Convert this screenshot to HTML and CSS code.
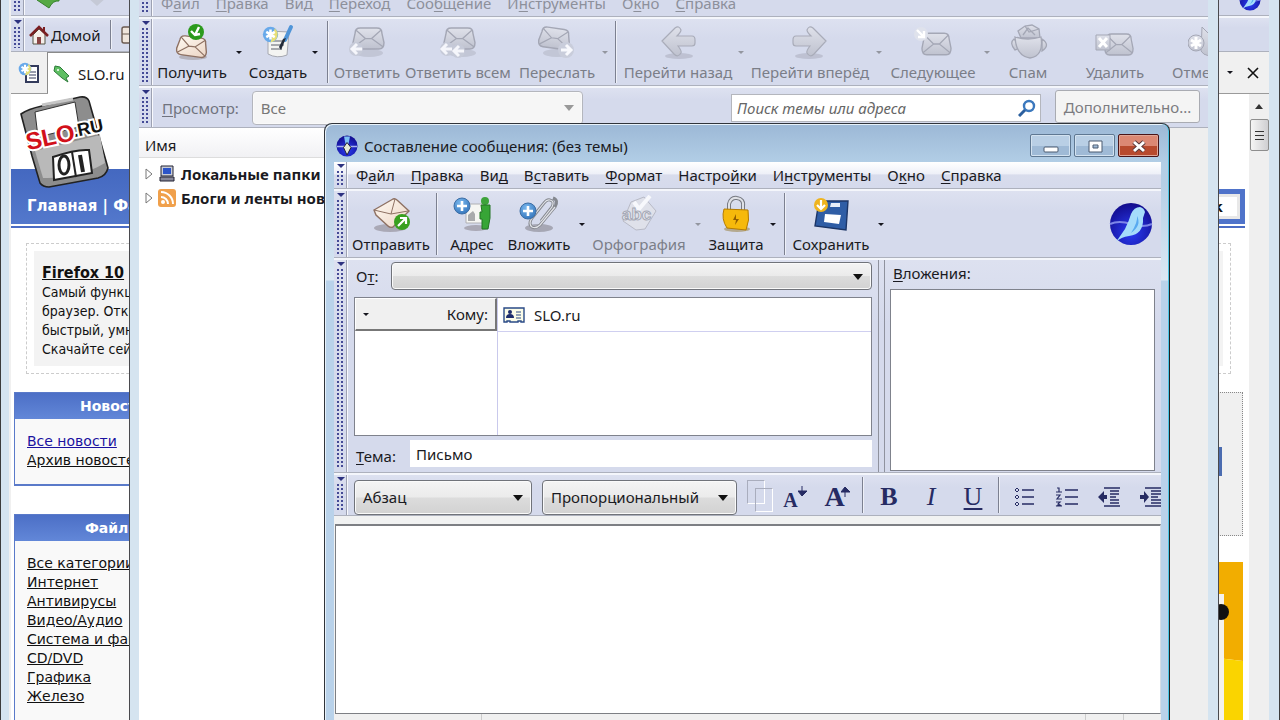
FILE: index.html
```html
<!DOCTYPE html>
<html lang="ru">
<head>
<meta charset="utf-8">
<title>Составление сообщения: (без темы)</title>
<link rel="stylesheet" href="styles.css">
</head>
<body>
<svg class="defs" aria-hidden="true">
  <defs>
    <linearGradient id="paper" x1="0" y1="0" x2="1" y2="1"><stop offset="0" stop-color="#fffaf3"/><stop offset="1" stop-color="#ecd5c4"/></linearGradient>
    <linearGradient id="silver" x1="0" y1="0" x2="0" y2="1"><stop offset="0" stop-color="#dfe1ea"/><stop offset="1" stop-color="#bfc2cf"/></linearGradient>
    <radialGradient id="globe" cx="0.5" cy="0.7" r="0.7"><stop offset="0" stop-color="#2a3cf4"/><stop offset="1" stop-color="#120c8c"/></radialGradient>
    <radialGradient id="badge" cx="0.4" cy="0.3" r="0.8"><stop offset="0" stop-color="#7ab8ee"/><stop offset="1" stop-color="#2f70b8"/></radialGradient>
    <symbol id="mail" viewBox="0 0 32 24" preserveAspectRatio="none">
      <path d="M3 7Q3 2 8 2H24Q29 2 29 7L31 16Q31 22 26 22H6Q1 22 1 16Z" stroke-width="1.4"/>
      <path d="M4 4L13 12H19L28 4M2 20L13 12M30 20L19 12" fill="none" stroke-width="1.2"/>
    </symbol>
    <symbol id="bird" viewBox="0 0 44 44">
      <circle cx="22" cy="22" r="21" fill="url(#globe)"/>
      <path d="M1 22Q10 18 22 22T43 22" fill="none" stroke="#7d86e8" stroke-width="2"/>
      <path d="M31 5Q35 6 36 10L34 16Q35 32 20 34Q12 35 7 40L16 27Q20 19 22 12Q25 5 31 5Z" fill="#a5dcfb"/>
      <path d="M28 14Q33 23 22 31Q29 20 28 14Z" fill="#58aaf0"/>
    </symbol>
    <symbol id="arrow" viewBox="0 0 36 34">
      <ellipse cx="19" cy="31" rx="14" ry="3" fill="#b3b7c7" opacity=".7"/>
      <path d="M2 16L15 3Q19 0 21 5Q21 7 17 11H32Q35 11 35 15V18Q35 21 32 21H18Q22 26 21 28Q18 33 14 29Z" fill="url(#silver)" stroke="#a9acb9" stroke-width="1.2"/>
    </symbol>
    <symbol id="spark" viewBox="0 0 20 20">
      <circle cx="10" cy="10" r="9" fill="#68a9ea"/><path d="M15 3A9 9 0 0 1 10 19Z" fill="#e7df76"/>
      <path d="M10 4V16M5 7L15 13M15 7L5 13" stroke="#fff" stroke-width="3"/>
    </symbol>
  </defs>
</svg>

<main class="desktop">

<section class="win win-browser" aria-label="Браузер">
  <div class="bar b-top"><span class="grip"></span>
    <svg class="nav-ic" width="26" height="20" viewBox="0 0 26 20"><path d="M2 8L12 0V5H24V9Q18 8 14 16Z" fill="#55a944" stroke="#357f2b"/></svg>
    <svg class="nav-ic" width="26" height="20" viewBox="0 0 26 20"><path d="M24 5L14 14 4 5V0H24Z" fill="#c5c9d6"/></svg>
    <svg class="mini-bird" width="22" height="22"><use href="#bird"/></svg>
  </div>
  <div class="bar b-home"><span class="grip"></span>
    <button class="home" type="button">
      <svg width="20" height="20" viewBox="0 0 20 20"><path d="M4 10V19H16V9L10 4Z" fill="#f5efea" stroke="#554" /><path d="M1 11L10 2 19 11" fill="none" stroke="#7a1f22" stroke-width="2.6"/><path d="M14 2H16V6H14Z" fill="#7a1f22"/><path d="M8 12H12V19H8Z" fill="#8a4444"/></svg>
      Домой</button>
    <i class="vsep"></i>
    <svg width="20" height="20" viewBox="0 0 20 20"><rect x="2" y="2" width="16" height="16" rx="2" fill="#efe5dc" stroke="#6b5a50" stroke-width="1.4"/><path d="M2 9H18" stroke="#6b5a50"/></svg>
  </div>
  <div class="tabs">
    <button class="newtab" type="button" aria-label="Новая вкладка"><svg width="22" height="24" viewBox="0 0 22 24"><path d="M8 5H20V21H8Z" fill="#fff" stroke="#333b5c" stroke-width="2"/><path d="M11 11H18M11 14H18M11 17H18" stroke="#333b5c"/><use href="#spark" width="14" height="14" y="1"/></svg></button>
    <button class="tab" type="button"><svg width="18" height="18" viewBox="0 0 18 18"><path d="M2 1L7 2 16 11 13 13 15 17 9 13 1 6Z" fill="#5fbf63" stroke="#2b7a38"/><circle cx="5" cy="5" r="1" fill="#fff"/></svg>SLO.ru</button>
    <span class="tab-tools"><i class="caret"></i>
      <button class="tab-close" type="button" aria-label="Закрыть вкладку"><svg width="12" height="12" viewBox="0 0 12 12"><path d="M1 1L11 11M11 1L1 11" stroke="#111" stroke-width="1.6"/></svg></button></span>
  </div>
  <div class="viewport">
    <div class="page">
      <header class="site-head">
        <svg class="logo" width="94" height="96" viewBox="0 0 94 96">
          <path d="M3 19Q10 14 24 11L62 2Q69 1 71 6L90 73Q88 81 80 83L31 92Q25 92 22 88L14 61Z" fill="#8d8d8d" stroke="#222" stroke-width="1.6"/>
          <path d="M17 17L57 7 61 32 20 42Z" fill="#fff" stroke="#333"/>
          <path d="M24 10L55 4" stroke="#c5c5c5" stroke-width="3"/>
          <path d="M17 56L82 40 87 68Q60 84 25 83Z" fill="#b9b9b9"/>
          <path d="M35 62Q58 54 71 55L74 78 36 85Z" fill="#fff" stroke="#222" stroke-width="2"/>
          <path d="M54 57L58 82" stroke="#222" stroke-width="2"/>
          <path d="M62 60L65 77" stroke="#222" stroke-width="4"/>
          <ellipse cx="46" cy="70" rx="5" ry="9" fill="none" stroke="#222" stroke-width="3"/>
          <g transform="rotate(-12 10 52)" stroke="#fff" stroke-width="4" paint-order="stroke"><text x="57" y="52" class="l-ru">.RU</text><text x="9" y="55" class="l-slo">SLO</text></g>
        </svg>
        <nav class="band"><span class="links"><a href="#">Главная</a> | <a href="#">Файлы</a></span><span class="findbox"><button class="find" type="button">Поиск</button></span></nav>
      </header>
      <div class="promo"><div class="promo-in"><a href="#">Firefox 10</a><p>Самый функциональный<br>браузер. Открытый,<br>быстрый, умный.<br>Скачайте сейчас</p></div></div>
      <div class="cols">
        <div class="side">
          <section class="box"><h2>Новости</h2><ul><li><a class="blue" href="#">Все новости</a></li><li><a href="#">Архив новостей</a></li></ul></section>
          <section class="box"><h2>Файлы</h2><ul><li><a href="#">Все категории</a></li><li><a href="#">Интернет</a></li><li><a href="#">Антивирусы</a></li><li><a href="#">Видео/Аудио</a></li><li><a href="#">Система и файлы</a></li><li><a href="#">CD/DVD</a></li><li><a href="#">Графика</a></li><li><a href="#">Железо</a></li></ul></section>
        </div>
        <div class="aside">
          <div class="dotted"><span></span></div>
          <svg class="banner" width="60" height="170" viewBox="0 0 60 170"><path d="M0 0H60V99L0 92Z" fill="#f2ad00"/><path d="M0 92L60 99V170H0Z" fill="#fad400"/><path d="M0 32H41V170H0Z" fill="#f4f2ee"/><circle cx="38" cy="50" r="8" fill="#111"/></svg>
        </div>
      </div>
    </div>
    <div class="scroll"><i class="up"></i><span class="thumb"><i></i><i></i><i></i></span></div>
  </div>
</section>

<section class="win win-mail" aria-label="Почта">
  <div class="bar menubar dim"><span class="grip"></span>
    <nav><a>Ф<u>а</u>йл</a><a><u>П</u>равка</a><a>Ви<u>д</u></a><a><u>П</u>ереход</a><a>Соо<u>б</u>щение</a><a>И<u>н</u>струменты</a><a>О<u>к</u>но</a><a><u>С</u>правка</a></nav>
  </div>
  <div class="bar toolbar"><span class="grip"></span>
    <button class="tool w74" type="button"><svg width="38" height="38" viewBox="0 0 38 38"><ellipse cx="20" cy="34" rx="14" ry="3" fill="#b5b3bd"/><g transform="rotate(8 19 24)" fill="url(#paper)" stroke="#8e7163"><use href="#mail" x="3" y="12" width="32" height="23"/></g><circle cx="23" cy="9" r="8" fill="#2b9a1c"/><path d="M26 4L22 12M18 8L22 12 27 11" stroke="#fff" stroke-width="2.4" fill="none"/></svg>Получить</button>
    <span class="drop w20"><i class="caret"></i></span>
    <button class="tool w58" type="button"><svg width="38" height="38" viewBox="0 0 38 38"><path d="M9 8L30 9 28 32Q18 36 9 31Z" fill="#f4f4f2" stroke="#a6a8b0"/><path d="M13 18H26M12 22H25M12 26H23" stroke="#8d9098" stroke-width="1.4"/><path d="M32 4L26 17" stroke="#5095d8" stroke-width="4" stroke-linecap="round"/><path d="M27 15L22 27 20 24 24 16Z" fill="#222a38"/><use href="#spark" width="17" height="17" x="3" y="3"/></svg>Создать</button>
    <span class="drop w16"><i class="caret"></i></span><i class="vsep"></i>
    <button class="tool w68" type="button" disabled><svg width="40" height="38" viewBox="0 0 40 38" fill="url(#silver)" stroke="#a4a7b5"><ellipse cx="22" cy="30" rx="14" ry="4" fill="#c2c6d6" stroke="none"/><use href="#mail" x="5" y="3" width="33" height="25"/><circle cx="9" cy="26" r="7" fill="#c6cad8" stroke="none"/><path d="M15 26H6M10 21L5 26 10 31" fill="none" stroke="#f5f6fb" stroke-width="3"/></svg>Ответить</button>
    <button class="tool w114" type="button" disabled><svg width="40" height="38" viewBox="0 0 40 38" fill="url(#silver)" stroke="#a4a7b5"><ellipse cx="24" cy="30" rx="14" ry="4" fill="#c2c6d6" stroke="none"/><use href="#mail" x="5" y="3" width="33" height="25"/><circle cx="9" cy="26" r="7" fill="#c6cad8" stroke="none"/><circle cx="20" cy="28" r="7" fill="#c6cad8" stroke="none"/><path d="M14 26H5M9 21L4 26 9 31M26 28H17M21 23L16 28 21 33" fill="none" stroke="#f5f6fb" stroke-width="3"/></svg>Ответить всем</button>
    <button class="tool w84" type="button" disabled><svg width="40" height="38" viewBox="0 0 40 38" fill="url(#silver)" stroke="#a4a7b5"><ellipse cx="20" cy="30" rx="14" ry="4" fill="#c2c6d6" stroke="none"/><g transform="rotate(8 16 16)"><use href="#mail" x="1" y="3" width="33" height="24"/></g><circle cx="29" cy="27" r="8" fill="#c9cddb" stroke="none"/><path d="M24 27H32M29 22L34 27 29 32" fill="none" stroke="#f8f9fd" stroke-width="3"/></svg>Переслать</button>
    <span class="drop w12 off"><i class="caret"></i></span><i class="vsep"></i>
    <button class="tool w114" type="button" disabled><svg width="38" height="38"><use href="#arrow" x="1" y="2" width="36" height="34"/></svg>Перейти назад</button>
    <span class="drop w12 off"><i class="caret"></i></span>
    <button class="tool w126" type="button" disabled><svg width="38" height="38"><g transform="matrix(-1 0 0 1 38 0)"><use href="#arrow" x="1" y="2" width="36" height="34"/></g></svg>Перейти вперёд</button>
    <span class="drop w12 off"><i class="caret"></i></span>
    <button class="tool w96" type="button" disabled><svg width="40" height="38" viewBox="0 0 40 38" fill="url(#silver)" stroke="#a4a7b5"><use href="#mail" x="8" y="8" width="31" height="26"/><circle cx="8" cy="11" r="7" fill="#dfe2ec" stroke="none"/><path d="M4 7L11 14M11 8V14H5" fill="none" stroke="#fff" stroke-width="2.4"/></svg>Следующее</button>
    <span class="drop w12 off"><i class="caret"></i></span>
    <button class="tool w70" type="button" disabled><svg width="40" height="38" viewBox="0 0 40 38" fill="url(#silver)" stroke="#a4a7b5" stroke-width="1.3"><path d="M13 15L10 8 17 3 24 2 31 6 32 15Z"/><path d="M15 12L20 5 27 12M17 3L21 9 31 6" fill="none"/><path d="M6 16Q1 20 7 27L14 24ZM34 16Q43 22 34 28Z"/><path d="M7 14Q20 18 33 14Q36 33 22 35Q8 33 7 14Z"/></svg>Спам</button>
    <button class="tool w104" type="button" disabled><svg width="40" height="38" viewBox="0 0 40 38" fill="url(#silver)" stroke="#a4a7b5"><use href="#mail" x="9" y="9" width="30" height="25"/><path d="M1 12H15V27H1Z"/><path d="M4 15L12 24M12 15L4 24" stroke="#fff" stroke-width="3"/></svg>Удалить</button>
    <button class="tool w82" type="button" disabled><svg width="40" height="38" viewBox="0 0 40 38" fill="url(#silver)" stroke="#a4a7b5"><path d="M14 4L23 13 30 7V30Q18 36 13 28Z"/><circle cx="8" cy="20" r="8"/><path d="M8 14V26M3 17L13 23M13 17L3 23" stroke="#fff" stroke-width="3"/></svg>Отменить</button>
  </div>
  <div class="bar searchbar"><span class="grip"></span>
    <label for="view"><u>П</u>росмотр:</label>
    <span class="sel view"><select id="view" disabled><option>Все</option></select></span>
    <span class="search"><input type="text" aria-label="Поиск" placeholder="Поиск темы или адреса"><svg width="18" height="18" viewBox="0 0 18 18"><circle cx="11" cy="7" r="5" fill="none" stroke="#3b78bd" stroke-width="2.4"/><path d="M7 11L1 17" stroke="#2b5f9e" stroke-width="3"/></svg></span>
    <button class="more" type="button"><u>Д</u>ополнительно...</button>
  </div>
  <div class="folders">
    <div class="col-head">Имя</div>
    <ul>
      <li><svg width="8" height="12" viewBox="0 0 8 12"><path d="M1 1L7 6 1 11Z" fill="#fff" stroke="#777"/></svg><svg width="18" height="18" viewBox="0 0 18 18"><path d="M3 1H15V11H3Z" fill="#c9ccd6" stroke="#223"/><path d="M5 3H13V9H5Z" fill="#2c54c8"/><path d="M2 12H16V16H2Z" fill="#889" stroke="#223"/></svg>Локальные папки</li>
      <li><svg width="8" height="12" viewBox="0 0 8 12"><path d="M1 1L7 6 1 11Z" fill="#fff" stroke="#777"/></svg><svg width="18" height="18" viewBox="0 0 18 18"><rect width="18" height="18" rx="3" fill="#f0a04b"/><circle cx="5" cy="13" r="2" fill="#fff"/><path d="M3 8A7 7 0 0 1 10 15M3 3A12 12 0 0 1 15 15" fill="none" stroke="#fff" stroke-width="2"/></svg>Блоги и ленты новостей</li>
    </ul>
  </div>
</section>

<section class="win win-compose" aria-label="Составление сообщения">
  <header class="title">
    <svg width="22" height="22" viewBox="0 0 44 44"><circle cx="22" cy="22" r="21" fill="url(#globe)"/><path d="M2 23H42" stroke="#aab4ee" stroke-width="3"/><path d="M16 3H28L25 18H19Z" fill="#7cc0f4"/><path d="M22 15L30 25 22 40 15 25Z" fill="#e6ecd8" stroke="#223" stroke-width="2"/></svg>
    <h1>Составление сообщения: (без темы)</h1>
    <button class="wb" type="button" aria-label="Свернуть"><svg width="20" height="16" viewBox="0 0 20 16"><rect x="3" y="9" width="14" height="5" rx="1" fill="#fff" stroke="#4b5b70"/></svg></button>
    <button class="wb" type="button" aria-label="Развернуть"><svg width="20" height="16" viewBox="0 0 20 16"><path d="M4 3H17V14H4ZM8 7V10H13V7Z" fill="#fff" fill-rule="evenodd" stroke="#4b5b70"/></svg></button>
    <button class="wb close" type="button" aria-label="Закрыть"><svg width="20" height="16" viewBox="0 0 20 16"><path d="M5 4L15 13M15 4L5 13" stroke="#5b3a3c" stroke-width="5"/><path d="M5 4L15 13M15 4L5 13" stroke="#fff" stroke-width="3"/></svg></button>
  </header>
  <div class="bar menubar"><span class="grip"></span>
    <nav><a>Ф<u>а</u>йл</a><a><u>П</u>равка</a><a>Ви<u>д</u></a><a>В<u>с</u>тавить</a><a><u>Ф</u>ормат</a><a>Настро<u>й</u>ки</a><a>И<u>н</u>струменты</a><a>О<u>к</u>но</a><a><u>С</u>правка</a></nav>
  </div>
  <div class="bar toolbar"><span class="grip"></span>
    <button class="tool w82" type="button"><svg width="40" height="38" viewBox="0 0 40 38"><ellipse cx="19" cy="33" rx="16" ry="4" fill="#aaa9b6"/><path d="M3 15L22 4Q24 3 26 5L38 16 22 32Q19 33 17 31L5 20Z" fill="url(#paper)" stroke="#8e7163" stroke-width="1.4"/><path d="M3 15L20 19 24 4M20 19L37 16" fill="none" stroke="#8e7163"/><circle cx="31" cy="27" r="8" fill="#38a01f"/><path d="M27 31L34 24M29 23H35V29" stroke="#fff" stroke-width="2.2" fill="none"/></svg>Отправить</button><i class="vsep"></i>
    <button class="tool w60" type="button"><svg width="38" height="38" viewBox="0 0 38 38"><ellipse cx="23" cy="33" rx="12" ry="3" fill="#aaa9b6"/><path d="M13 9H32V28H13Z" fill="#f6f6f3" stroke="#b0b0b4"/><path d="M15 26V20L20 16 22 19V26Z" fill="#a9aaac"/><circle cx="9" cy="11" r="8" fill="url(#badge)" stroke="#3d6ea5"/><path d="M9 6V16M4 11H14" stroke="#fff" stroke-width="2.6"/><circle cx="32" cy="6" r="4" fill="#3ea33b"/><path d="M28 10H37V23L35 34H29V24H27V17H29Z" fill="#37a536" stroke="#237522"/></svg>Адрес</button>
    <button class="tool w74" type="button"><svg width="40" height="38" viewBox="0 0 40 38"><ellipse cx="20" cy="33" rx="14" ry="4" fill="#a6a7b4"/><path d="M22 26L33 12Q36 6 31 5Q28 4 25 8L13 23Q9 29 13 32Q17 34 21 30L36 12Q40 5 34 3" fill="none" stroke="#85888f" stroke-width="3"/><path d="M22 26L33 12Q36 6 31 5Q28 4 25 8L13 23Q9 29 13 32Q17 34 21 30L36 12" fill="none" stroke="#e1e3e8" stroke-width="1.2"/><circle cx="9" cy="16" r="8" fill="url(#badge)" stroke="#3d6ea5"/><path d="M9 11V21M4 16H14" stroke="#fff" stroke-width="2.6"/></svg>Вложить</button>
    <span class="drop w12"><i class="caret"></i></span>
    <button class="tool w102" type="button" disabled><svg width="40" height="38" viewBox="0 0 40 38"><path d="M12 7L25 2 37 16 26 34 17 35 4 26Z" fill="#dfe1ea" stroke="#b8bac6"/><path d="M15 7L20 14 31 1" fill="none" stroke="#f7f8fc" stroke-width="4"/><text x="3" y="25" class="abc">abc</text></svg>Орфография</button>
    <span class="drop w16 off"><i class="caret"></i></span>
    <button class="tool w60" type="button"><svg width="36" height="38" viewBox="0 0 36 38"><ellipse cx="19" cy="34" rx="13" ry="3" fill="#b4a98f"/><path d="M11 16V9Q13 2 19 3Q26 4 25 11V17" fill="none" stroke="#777a82" stroke-width="4"/><path d="M11 16V9Q13 2 19 3Q26 4 25 11V17" fill="none" stroke="#dfe1e6" stroke-width="2"/><path d="M6 14L30 15Q32 25 28 35L9 33Q3 24 6 14Z" fill="#f6b90b" stroke="#b47b00"/><path d="M18 19L15 25H18L17 30L21 24H18Z" fill="#925f00"/></svg>Защита</button>
    <span class="drop w14"><i class="caret"></i></span><i class="vsep"></i>
    <button class="tool w82" type="button"><svg width="38" height="38" viewBox="0 0 38 38"><path d="M7 6H36L34 35 3 31Z" fill="#2f5da5" stroke="#1c3566" stroke-width="1.4"/><path d="M19 8H28V12H18Z" fill="#e8eef8"/><path d="M13 19L29 20 27 29 12 27Z" fill="#fff"/><circle cx="9" cy="10" r="7" fill="#efb41e"/><path d="M9 5V14M5 10L9 14 13 10" stroke="#fff" stroke-width="2.2" fill="none"/></svg>Сохранить</button>
    <span class="drop w18"><i class="caret"></i></span>
    <svg class="throbber" width="44" height="44"><use href="#bird"/></svg>
  </div>
  <div class="bar address"><span class="grip"></span>
    <div class="fields">
      <div class="from"><label for="from">О<u>т</u>:</label><span class="sel"><select id="from"><option></option></select></span></div>
      <div class="to">
        <div class="kind"><button type="button"><i class="caret"></i>Кому:</button></div>
        <div class="who"><div class="rcpt"><svg width="22" height="18" viewBox="0 0 22 18"><path d="M1 2H21V16H18V15H15V16H7V15H4V16H1Z" fill="#fbfce8" stroke="#2a4a86" stroke-width="1.4"/><circle cx="7" cy="6" r="2" fill="#1d2c6c"/><path d="M3 12Q3 8 7 8T11 12Z" fill="#1d2c6c"/><path d="M13 6H18M13 9H18M13 12H18" stroke="#2a4a86"/></svg><input type="text" aria-label="Кому" value="SLO.ru"></div></div>
      </div>
      <div class="subj"><label for="subj"><u>Т</u>ема:</label><input id="subj" type="text" value="Письмо"></div>
    </div>
    <div class="attach"><span class="att-label" id="att"><u>В</u>ложения:</span><div aria-labelledby="att" role="listbox" class="attbox"></div></div>
  </div>
  <div class="bar format"><span class="grip"></span>
    <span class="sel para"><select aria-label="Абзац"><option>Абзац</option></select></span>
    <span class="sel face"><select aria-label="Шрифт"><option>Пропорциональный</option></select></span>
    <button class="fb color" type="button" aria-label="Цвет"><i></i><i></i></button>
    <button class="fb" type="button" aria-label="Уменьшить"><span class="a-sm">A</span><svg width="9" height="11" viewBox="0 0 9 11"><path d="M4 0V5M0 5H9L4 10Z" stroke="#262b63" fill="#262b63"/></svg></button>
    <button class="fb" type="button" aria-label="Увеличить"><span class="a-lg">A</span><svg class="lap" width="9" height="11" viewBox="0 0 9 11"><path d="M4 11V5M0 6H9L4 1Z" stroke="#262b63" fill="#262b63"/></svg></button>
    <i class="vsep"></i>
    <button class="fb" type="button"><b>B</b></button><button class="fb" type="button"><em>I</em></button><button class="fb" type="button"><span class="un">U</span></button>
    <i class="vsep"></i>
    <button class="fb" type="button" aria-label="Маркированный список"><svg width="22" height="20" viewBox="0 0 22 20" stroke="#262b63" stroke-width="1.6" fill="none"><path d="M8 3H20M8 10H20M8 17H20"/><path d="M1 3L3 1 5 3 3 5ZM1 10L3 8 5 10 3 12ZM1 17L3 15 5 17 3 19Z" stroke-width="1"/></svg></button>
    <button class="fb" type="button" aria-label="Нумерованный список"><svg width="24" height="20" viewBox="0 0 24 20" stroke="#262b63" stroke-width="1.6" fill="none"><path d="M10 3H23M10 10H23M10 17H23"/><path d="M2 1H4V5M1 5H7M1 8H5L2 12H7M1 15H5L3 17 5 18 1 19H7" stroke-width="1.2"/></svg></button>
    <button class="fb" type="button" aria-label="Уменьшить отступ"><svg width="22" height="20" viewBox="0 0 22 20" stroke="#262b63" stroke-width="1.5"><path d="M6 1H22M12 4H21M12 7H21M12 10H18M12 13H21M12 16H21M6 19H22"/><path d="M0 10L6 4V8H9V12H6V16Z" fill="#262b63" stroke="none"/></svg></button>
    <button class="fb" type="button" aria-label="Увеличить отступ"><svg width="22" height="20" viewBox="0 0 22 20" stroke="#262b63" stroke-width="1.5"><path d="M5 1H22M11 4H21M11 7H21M11 10H18M11 13H21M11 16H21M5 19H22"/><path d="M9 10L4 4V8H0V12H4V16Z" fill="#262b63" stroke="none"/></svg></button>
  </div>
  <div class="pane"><textarea class="editor" aria-label="Текст сообщения"></textarea></div>
  <footer class="status"><span></span><span></span><span></span></footer>
</section>
</main>
</body>
</html>
```
FILE: styles.css
```css
*, *::before, *::after { box-sizing: border-box; }
body { margin: 0; font: 15px/20px "Noto Sans", "Open Sans", sans-serif; color: #1a1a22; }
button, input, select, textarea { font: inherit; color: inherit; margin: 0; border-radius: 0; }
button { padding: 0; border: 0; background: none; }
ul, p, h1, h2 { margin: 0; padding: 0; list-style: none; }
svg { flex: none; display: block; }
u { text-underline-offset: 2px; }
.defs { position: absolute; width: 0; height: 0; }

.desktop { position: relative; height: 100vh; overflow: hidden; background: #d6e5f1; }
.win { position: absolute; display: flex; flex-direction: column; overflow: hidden; background: #f0f0f0; background-clip: padding-box; }
.win-browser { inset: -8px 0 -20px 0; border: solid #d5e4f0; border-width: 0 11px 0 9px; outline: 2px solid #3c3c3c; outline-offset: -1px; padding-left: 2px; }
.win-mail { left: 129px; right: 61px; top: -15px; bottom: -20px; padding: 0 10px 0 9px; border: solid #4a4a4e; border-width: 0 1px; background: #d5e4f0; }
.win-compose { left: 324px; right: 110px; top: 123px; bottom: -20px; padding: 1px 8px 0 9px; border: 1px solid #30343a; border-right: 1px solid #222; border-radius: 8px 8px 0 0; box-shadow: inset -1px 0 #4cc6e6, inset 1px 1px #e8f2fa; background: linear-gradient(#9cb8d6 0, #b2cee6 39px, #b5cfe6 60px, #dbe8f4 156px, #b9d2ea 157px, #b9d2ea); }

/* toolbars */
.bar { flex: none; display: flex; align-items: center; overflow: hidden; background: linear-gradient(#dde1f0, #d5daec 30%, #d5daec); border-top: 2px solid #f4f6fb; border-bottom: 1px solid #adb1bd; }
.grip { flex: none; align-self: stretch; width: 14px; margin-right: 2px; padding: 2px 0 3px 3px; border-right: 1px solid #f8f9fd; box-shadow: inset -1px 0 #9da1b2; display: flex; flex-direction: column; gap: 3px; }
.grip::before { content: ""; border: 4px solid transparent; border-top: 4px solid #2d3280; border-bottom: 0; width: 8px; }
.grip::after { content: ""; flex: 1; width: 7px; background: radial-gradient(circle at 1px 1px, #444a96 1px, transparent 1px) 0 0 / 4px 4px; }
.vsep { flex: none; align-self: stretch; width: 2px; margin: 2px 4px; border-left: 1px solid #7c8090; border-right: 1px solid #eef0f8; }
.caret { display: block; width: 6px; border: 3px solid transparent; border-top-color: #16161e; border-bottom: 0; }
.off .caret { border-top-color: #93969f; }
.drop { flex: none; display: flex; justify-content: center; }
.tool { flex: none; display: flex; flex-direction: column; align-items: center; white-space: nowrap; line-height: 20px; }
.tool svg { margin-bottom: 1px; }
.tool:disabled { color: #7b7e88; }
.toolbar { height: 69px; }
.w12 { width: 12px; } .w14 { width: 14px; } .w16 { width: 16px; } .w18 { width: 18px; } .w20 { width: 20px; }
.w58 { width: 58px; } .w60 { width: 60px; } .w68 { width: 68px; } .w70 { width: 70px; } .w74 { width: 74px; }
.w82 { width: 82px; } .w84 { width: 84px; } .w96 { width: 96px; } .w102 { width: 102px; } .w104 { width: 104px; }
.w114 { width: 114px; } .w126 { width: 126px; }
.menubar nav { display: flex; gap: 16px; padding-left: 6px; white-space: nowrap; }
.dim { color: #8d909b; }
.sel { position: relative; display: flex; }
.sel select { appearance: none; width: 100%; padding: 0 8px; border: 1px solid #70737a; border-radius: 4px; background: linear-gradient(#f4f4f4, #ebebeb 48%, #dcdcdc 52%, #d2d2d2); color: #1a1a22; opacity: 1; box-shadow: inset 0 0 0 1px #fafafa; }
.sel::after { content: ""; position: absolute; right: 9px; top: 50%; border: 5px solid transparent; border-top: 6px solid #111; border-bottom: 0; margin-top: -2px; pointer-events: none; }

/* browser */
.b-top { height: 24px; border-top: 0; }
.nav-ic { margin: 0 14px 8px 8px; align-self: flex-start; }
.mini-bird { margin: 0 8px 8px auto; }
.b-home { height: 36px; }
.home { display: flex; align-items: center; gap: 2px; padding: 0 5px 0 2px; }
.b-home .vsep { margin-right: 8px; }
.tabs { flex: none; display: flex; height: 42px; background: #f0f0f0; border-bottom: 1px solid #9a9a9a; }
.newtab { width: 37px; display: flex; align-items: center; justify-content: center; border-right: 1px solid #8a8a8a; }
.tab { width: 200px; display: flex; align-items: center; gap: 7px; padding-left: 5px; margin-bottom: -1px; background: #fff; border-top: 1px solid #8a8a8a; border-right: 1px solid #8a8a8a; }
.tab-tools { margin-left: auto; display: flex; align-items: center; gap: 14px; padding-right: 10px; }
.viewport { flex: 1; min-height: 0; display: flex; background: #fff; }
.page { flex: 1; position: relative; overflow: hidden; padding-right: 4px; font: 14px/19px "DejaVu Sans Condensed", "DejaVu Sans", sans-serif; color: #111; }
.page a { color: inherit; }
.site-head { padding-top: 75px; border-bottom: 2px solid #4b6cc4; }
.logo { position: absolute; left: 7px; top: 1px; }
.l-slo { font: bold 24px "Liberation Sans", sans-serif; fill: #d2101a; }
.l-ru { font: bold 18px "Liberation Sans", sans-serif; fill: #111; }
.band { display: flex; align-items: flex-end; height: 55px; margin-bottom: 2px; color: #fff; font: bold 14px/26px "DejaVu Sans", sans-serif; }
.links { flex: 1; margin-right: 160px; padding: 24px 16px 5px; background: linear-gradient(#4468c0, #5378cc); font-size: 15px; }
.findbox { display: flex; padding: 5px; background: #4f73ca; }
.band a { text-decoration: none; }
.find { height: 25px; padding: 0 14px; background: #fff; border: 3px solid #e8e8e8; color: #111; line-height: 18px; }
.promo { height: 131px; margin: 15px 14px 0 15px; padding: 7px; border: 1px dashed #ccc; }
.promo-in { height: 115px; padding: 12px 8px; background: #f3f3f3; line-height: 19px; }
.promo-in > a { font: bold 16px/20px "DejaVu Sans Condensed", "DejaVu Sans", sans-serif; }
.cols { display: flex; justify-content: space-between; margin: 18px 2px 0 3px; }
.side { width: 198px; display: flex; flex-direction: column; gap: 28px; }
.box { border: 1px solid #5a7ac9; border-bottom-width: 2px; background: #f9f9f9; }
.box h2 { height: 26px; background: linear-gradient(#4c6fc6, #6287d8); color: #fff; text-align: center; font: bold 14px/26px "DejaVu Sans", sans-serif; }
.box ul { padding: 13px 12px 14px; font-family: "DejaVu Sans", sans-serif; }
.box .blue { color: #1b12a0; }
.aside { width: 60px; }
.dotted { height: 144px; margin: 0 0 26px; padding: 54px 22px; border: 1px dotted #888; background: #f0f0f0; }
.dotted span { display: block; height: 29px; width: 16px; background: #4b6cb0; }
.scroll { width: 20px; display: flex; flex-direction: column; align-items: center; background: #efefef; }
.up { margin: 10px 0; border: 4px solid transparent; border-bottom: 5px solid #333; border-top: 0; }
.thumb { width: 19px; height: 32px; display: flex; flex-direction: column; gap: 3px; align-items: center; justify-content: center; border: 1px solid #8d8d8d; border-radius: 2px; background: linear-gradient(90deg, #f5f5f5, #cfcfd2); }
.thumb i { width: 9px; height: 1px; background: #333; }

/* mail */
.win-mail .menubar { height: 32px; padding-top: 4px; border-top: 0; }
.searchbar { height: 42px; }
.searchbar label { color: #70737e; padding: 0 13px 0 7px; }
.view { flex: 0 0 331px; margin-right: auto; align-self: flex-start; }
.view select { height: 34px; margin-top: 3px; border-color: #b4b6bd; background: #f6f6f6; color: #777; }
.view::after { border-top-color: #999; }
.search { width: 310px; height: 28px; margin-right: 14px; display: flex; align-items: center; background: #fff; border: 1px solid #b4b6bd; padding-right: 4px; }
.search input { flex: 1; min-width: 0; border: 0; padding: 0 5px; font-style: italic; background: none; }
.search input::placeholder { color: #666; opacity: 1; }
.more { height: 33px; margin: 0 8px 2px 0; width: 145px; text-align: center; white-space: nowrap; border: 1px solid #a9abb2; border-radius: 3px; background: #f4f4f4; color: #7b7b80; }
.folders { flex: 1; background: linear-gradient(90deg, #fff 0 240px, #eee 240px); }
.col-head { width: 240px; height: 30px; padding: 0 6px; line-height: 34px; background: linear-gradient(#fff, #f1f1f4); border-bottom: 1px solid #ddd; }
.folders ul { width: 240px; padding: 4px 6px; font-weight: bold; }
.folders li { display: flex; align-items: center; gap: 5px; height: 24px; white-space: nowrap; }

/* compose */
.title { flex: none; height: 37px; display: flex; align-items: center; gap: 3px; padding: 4px 2px 0 2px; }
.title h1 { flex: 1; font-size: 15px; font-weight: normal; padding-left: 3px; }
.wb { width: 41px; height: 23px; display: flex; align-items: center; justify-content: center; border: 1px solid #5f7892; border-radius: 2px; box-shadow: inset 0 0 0 1px #d3e2f0; background: linear-gradient(#b9cfe5 50%, #9fbad6 50%); }
.wb.close { border-color: #4a1418; box-shadow: inset 0 0 0 1px #e0a596; background: linear-gradient(#dc8874 50%, #b84a2e 50%); }
.win-compose .menubar { height: 27px; border-top: 0; background: linear-gradient(#fff, #eef0f8 45%, #d8dcec 50%, #d5daec); }
.throbber { margin: 0 8px 0 auto; }
.address { align-items: stretch; height: 215px; }
.fields { flex: 1; display: flex; flex-direction: column; padding: 2px 6px 4px 4px; border-right: 1px solid #8f929e; }
.from { display: flex; align-items: center; height: 28px; padding-left: 2px; }
.from label { width: 35px; }
.from .sel { flex: 1; }
.from select { height: 28px; }
.to { height: 140px; margin: 7px 0 4px; display: flex; background: #fff; border: 1px solid #7f828c; }
.kind { width: 143px; border-right: 1px solid #c9c9ec; }
.kind button { width: 100%; height: 33px; display: flex; align-items: center; justify-content: space-between; padding: 0 7px; background: #f0f0f0; border: 1px solid #fff; border-right: 2px solid #777; border-bottom: 2px solid #777; }
.who { flex: 1; min-width: 0; }
.rcpt { display: flex; align-items: center; gap: 9px; height: 34px; padding-left: 5px; border-bottom: 1px solid #cfcff0; }
.rcpt input { flex: 1; min-width: 0; border: 0; padding: 0; background: none; }
.subj { display: flex; align-items: flex-start; height: 28px; padding-left: 2px; }
.subj label { width: 54px; line-height: 32px; }
.subj input { flex: 1; min-width: 0; height: 27px; border: 0; padding: 0 6px; background: #fff; }
.attach { flex: 0 0 277px; margin-left: 5px; padding: 1px 6px 1px 5px; border-left: 1px solid #8f929e; display: flex; flex-direction: column; }
.att-label { padding-left: 3px; line-height: 24px; margin-bottom: 4px; }
.attbox { flex: 1; background: #fff; border: 1px solid #7f828c; }
.format { height: 43px; }
.format .sel, .fb { margin-top: 4px; }
.format .sel select { height: 35px; }
.para { flex: 0 0 178px; margin: 0 10px 0 4px; }
.face { flex: 0 0 195px; margin-right: 8px; }
.fb { flex: none; width: 42px; height: 36px; display: flex; align-items: center; justify-content: center; color: #262b63; font: 26px/30px "Liberation Serif", serif; }
.fb svg[width="9"] { align-self: flex-start; margin-top: 7px; }
.fb .lap { margin-left: -4px; }
.a-sm { font-size: 20px; font-weight: bold; padding-top: 5px; }
.a-lg { font-size: 28px; font-weight: bold; }
.un { text-decoration: underline; text-underline-offset: 3px; }
.color { width: 29px; display: grid; place-items: start; padding: 1px; }
.color i { grid-area: 1 / 1; width: 18px; height: 24px; border: 1px solid #a9adbd; border-right-color: #fff; border-bottom-color: #fff; }
.color i + i { margin: 8px 0 0 8px; }
.pane { flex: 1; min-height: 0; display: flex; padding: 8px 0 0 1px; background: #f1f2f2; }
.editor { flex: 1; resize: none; outline: 0; border: solid #7d7f84; border-width: 2px 1px 1px 1px; border-right-color: #d6dde6; background: #fff; }
.status { flex: none; height: 25px; display: flex; background: #f0f0f0; }
.status span { width: 38px; border-left: 1px solid #ccc; }
.status span:first-child { width: auto; flex: 1; margin-left: 147px; }
.abc { font: bold 17px "Liberation Sans", sans-serif; fill: #e9ebf2; stroke: #a4a7b4; stroke-width: 1px; }
```
